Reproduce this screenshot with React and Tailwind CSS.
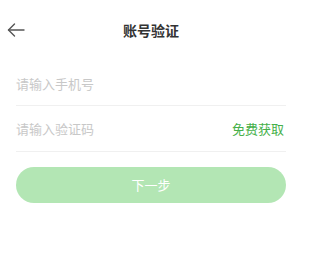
import React from 'react';

const font = { fontFamily: '"Noto Sans CJK SC", "Noto Sans", sans-serif' };

export default function App() {
  return (
    <div className="w-[302px] h-[268px] bg-white" style={font}>
      {/* Header */}
      <div className="relative h-[62px] flex items-center justify-center">
        <button className="absolute left-[7px] top-[23px] w-[18px] h-[14px] text-[#555]">
          <svg viewBox="0 0 18 14" width="18" height="14" fill="none" stroke="currentColor" strokeWidth="1.4" strokeLinecap="round" strokeLinejoin="round">
            <path d="M17 7H1.5" />
            <path d="M7.5 1L1.5 7l6 6" />
          </svg>
        </button>
        <h1 className="text-[14px] font-bold text-[#333] leading-none -mt-[2px]">账号验证</h1>
      </div>

      {/* Form */}
      <div className="px-4">
        <div className="h-[44px] flex items-center border-b border-[#f0f0f0]">
          <span className="text-[13px] text-[#c8c8c8]">请输入手机号</span>
        </div>
        <div className="h-[46px] flex items-center justify-between border-b border-[#f0f0f0]">
          <span className="text-[13px] text-[#c8c8c8]">请输入验证码</span>
          <span className="text-[13px] text-[#46b04a] mr-[2px]">免费获取</span>
        </div>
        <button className="mt-[15px] w-full h-[36px] rounded-full bg-[#b3e6b4] text-white text-[13px]">
          下一步
        </button>
      </div>
    </div>
  );
}
